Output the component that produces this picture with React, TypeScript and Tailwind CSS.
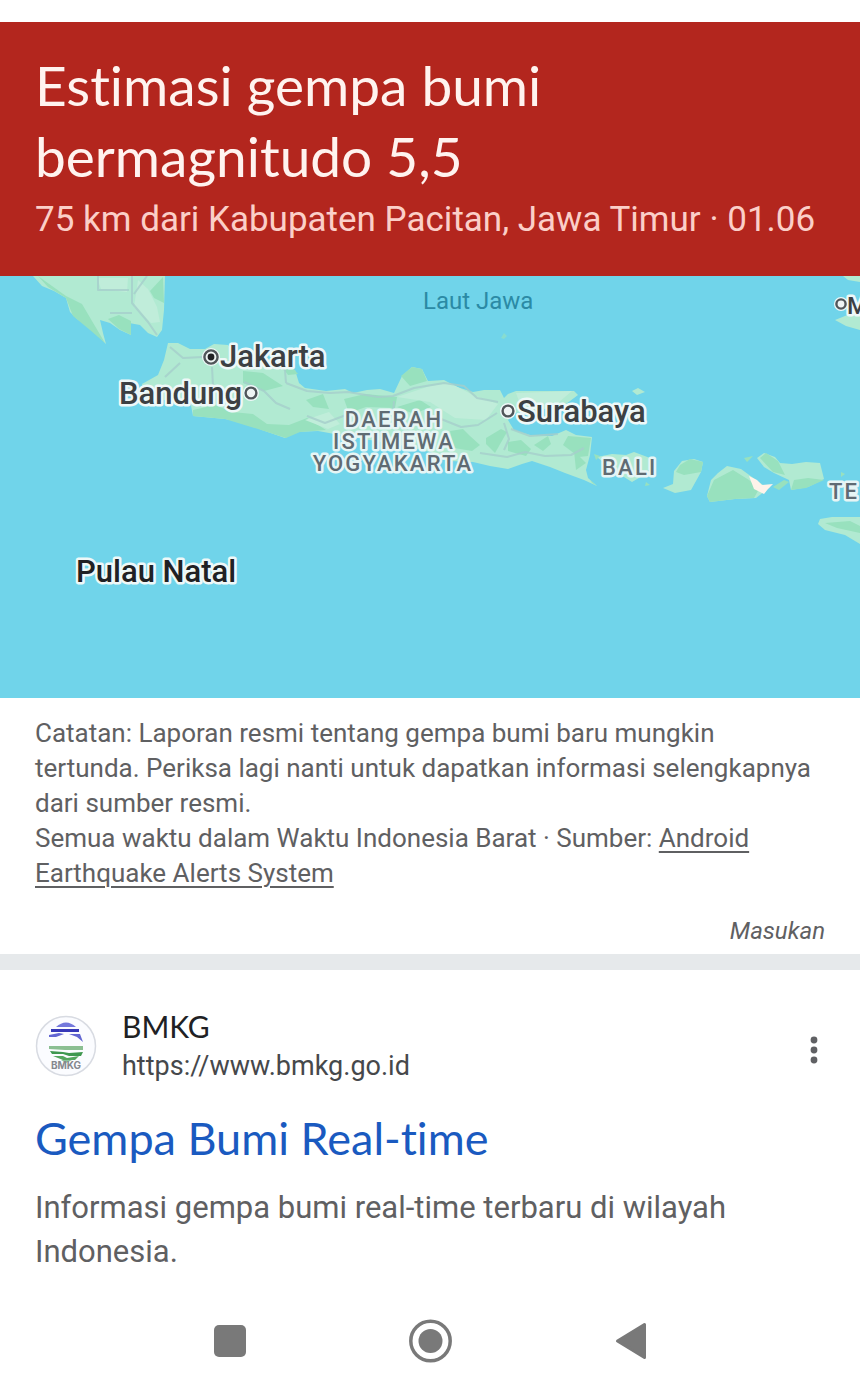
import React from "react";

const label = "fill-[#3c4043] stroke-[#eef8f8] font-medium [paint-order:stroke] [stroke-linejoin:round]";
const region = "fill-[#5f6b73] stroke-[#e6f5f5] text-[22px] font-medium tracking-widest [paint-order:stroke] [stroke-linejoin:round]";

function EarthquakeMap() {
  return (
    <svg
      className="block h-[422px] w-full bg-[#70d4ea]"
      viewBox="0 276 860 422"
      preserveAspectRatio="xMidYMid slice"
      role="img"
      aria-label="Peta Pulau Jawa dan sekitarnya"
    >
      <g fill="#b1ead2">
        <path d="M33 276 42 286 54 291 66 298 70 312 77 319 88 326 96 334 106 344 103 333 100 320 110 323 120 330 131 335 129 323 140 325 148 333 157 337 162 330 164 310 165 276Z" />
        <path d="M168 343 178 343 190 349 205 349 214 344 228 345 235 352 262 350 270 362 283 368 295 370 299 383 305 388 326 391 345 389 353 393 367 390 380 389 394 393 402 376 412 367 422 369 428 381 444 380 457 387 473 392 484 390 500 390 504 398 508 394 516 391 574 391 578 395 566 404 540 410 515 413 508 420 514 430 530 435 552 436 566 430 576 435 592 437 590 455 586 470 588 478 597 486 584 480 565 473 550 467 532 461 522 464 508 469 490 466 473 462 450 461 430 452 400 445 370 440 340 435 318 431 296 432 285 438 262 430 247 423 225 419 193 416 190 400 145 400 142 384 158 375 164 360Z" />
        <path d="M632 391 638 388 645 392 637 395Z" />
        <path d="M597 457 612 454 626 455 634 452 650 458 655 463 644 475 632 482 624 477 610 468Z" />
        <path d="M674 471 682 461 694 459 703 462 701 472 691 490 675 493 663 488 673 484Z" />
        <path d="M711 480 718 473 727 466 741 469 752 477 763 485 770 487 756 498 735 499 710 502 707 496Z" />
        <path d="M757 458 764 453 775 457 780 463 792 464 806 462 820 463 824 479 808 487 791 490 789 480 774 473 764 467Z" />
        <path d="M820 519 832 517 860 517 860 544 845 535 825 530 818 524Z" />
        <path d="M835 320 860 310 860 330 846 326Z" />
        <path d="M843 276H860V282L848 280Z" />
      </g>
      <g fill="#98e1be">
        <path d="M38 276 52 286 66 296 82 304 92 321 105 343 90 330 73 316 66 298 48 287Z" />
        <path d="M108 319 119 315 131 321 131 335 119 329Z" />
        <path d="M150 291 163 277 164 303 154 298Z" />
        <path d="M193 410 215 405 232 412 253 414 267 424 289 425 307 418 326 430 300 432 286 438 258 429 225 419 193 416Z" />
        <path d="M243 371 263 373 283 386 264 391 243 383Z" />
        <path d="M271 352 282 355 298 374 288 375Z" />
        <path d="M306 400 323 394 329 409 313 407Z" />
        <path d="M344 399 365 394 397 397 395 408 366 407 349 413Z" />
        <path d="M401 376 412 367 422 369 427 381 410 386Z" />
        <path d="M397 407 420 400 431 407 414 414Z" />
        <path d="M450 431 463 429 470 436 480 445 472 451 454 448Z" />
        <path d="M486 438 501 429 507 432 495 453 486 444Z" />
        <path d="M508 442 521 440 531 449 526 456 508 451Z" />
        <path d="M534 445 548 436 551 444 543 451Z" />
        <path d="M568 436 591 438 588 456 579 457 563 445Z" />
        <path d="M574 451 586 463 576 470Z" />
        <path d="M680 465 690 459 703 462 701 472 684 475 676 472Z" />
        <path d="M714 480 733 470 749 480 759 489 754 498 735 499 710 502 707 496Z" />
        <path d="M760 458 766 453 778 461 785 475 773 472Z" />
        <path d="M794 480 808 478 824 480 806 488 791 490Z" />
        <path d="M825 523 850 521 860 526 860 533 837 528Z" />
        <path d="M501 338 504 333 507 336 504 339Z" opacity=".6" />
        <path d="M773 487 784 480 789 482 779 490Z" />
      </g>
      <g fill="#c0edda">
        <path d="M97 278 128 278 127 292 101 289Z" />
        <path d="M138 280 148 289 157 307 160 322 151 323 134 307Z" />
        <path d="M397 397 430 386 450 383 473 395 498 404 486 420 455 418 430 402Z" />
        <path d="M516 393 572 391 558 403 520 404Z" />
        <path d="M305 420 329 412 340 424 328 429Z" />
      </g>
      <g fill="none" stroke="#a6cfcc" strokeWidth="2" strokeLinejoin="round" opacity=".8">
        <path d="M98 276V290H129M132 276V303L148 322 157 335M132 313H110M147 276 134 294" />
        <path d="M170 347 183 358 203 357M180 363 165 377" />
        <path d="M212 367 213 386M244 382 264 391 276 403 290 409M271 362 285 370 286 383" />
        <path d="M286 383 307 391 330 393 348 392 378 397 393 396 414 388 444 383 464 386 477 398 498 402" />
        <path d="M307 416 325 423 346 415M394 401 393 413" />
        <path d="M441 419 461 427 478 425 497 413M504 423 509 439 504 450M511 429 530 436 558 434" />
        <path d="M480 453 507 457 525 452 545 456 571 455 584 448" />
      </g>
      <path d="M749 476 757 480 762 485 773 484 768 489 764 494 754 489Z" fill="#fff3ea" />
      <g fill="#98e1be">
        <path d="M594 454 600 456 596 460ZM590 480 597 486 592 483ZM744 458 753 456 747 462ZM841 472 845 474 841 477ZM646 482 650 485 645 486Z" />
      </g>

      <g fill="#eef8f8" stroke="#eef8f8" strokeWidth="6">
        <circle cx="211" cy="357" r="6" />
        <circle cx="251" cy="393" r="5" />
        <circle cx="508" cy="411" r="5" />
        <circle cx="841" cy="304" r="4" />
      </g>
      <g fontFamily="Roboto, sans-serif" strokeWidth="5">
        <text x="423" y="309" className="fill-[#2b8aa5] text-[24px]" strokeWidth="0">Laut Jawa</text>
        <text x="220" y="367" className={`${label} text-[31px]`}>Jakarta</text>
        <text x="119" y="404" className={`${label} text-[31px]`}>Bandung</text>
        <text x="517" y="422" className={`${label} text-[31px]`}>Surabaya</text>
        <text x="76" y="582" className="fill-[#202124] stroke-[#eef8f8] text-[31px] font-medium [paint-order:stroke] [stroke-linejoin:round]">
          Pulau Natal
        </text>
        <text x="847" y="314" className={`${label} text-[24px]`}>M</text>
        <text x="394" y="427" textAnchor="middle" className={region}>DAERAH</text>
        <text x="394" y="449" textAnchor="middle" className={region}>ISTIMEWA</text>
        <text x="393" y="471" textAnchor="middle" className={region}>YOGYAKARTA</text>
        <text x="602" y="475" className={region}>BALI</text>
        <text x="829" y="499" className={region}>TE</text>
      </g>
      <g fill="#eef4f4" stroke="#50565a" strokeWidth="2.4">
        <circle cx="211" cy="357" r="6.6" />
        <circle cx="251" cy="393" r="5.4" />
        <circle cx="508" cy="411" r="5.4" />
        <circle cx="841" cy="304" r="4.6" />
      </g>
      <circle cx="211" cy="357" r="3.4" fill="#202124" />
    </svg>
  );
}

function BmkgLogo() {
  return (
    <svg className="size-[62px] shrink-0" viewBox="0 0 62 62" role="img" aria-label="Logo BMKG">
      <circle cx="31" cy="31" r="29.5" fill="#fbfcff" stroke="#d8dbe2" strokeWidth="1.5" />
      <path d="M21 12Q31 3 41 12Z" fill="#7478dc" />
      <path d="M16 14H44V17H16Z" fill="#3638b8" />
      <path d="M14 20 24 18 29 19 21 22 14 22ZM34 19H45L48 27 42 22Z" fill="#6266d2" />
      <path d="M14 31H48V35H30L14 34Z" fill="#8bbf92" />
      <path d="M15 36 28 37 34 38 48 37 46 41H34L28 39 17 39Z" fill="#3f9850" />
      <path d="M18 41 28 41 32 43 44 41 40 45 28 45Z" fill="#55a65f" />
      <path d="M26 45H37L31 48Z" fill="#8bc49a" />
      <text x="31" y="54" textAnchor="middle" fontFamily="Inter, sans-serif" fontSize="10" fontWeight="700" fill="#85888e">BMKG</text>
    </svg>
  );
}

export default function App() {
  return (
    <div className="bg-white pt-[22px] font-[Roboto,sans-serif] text-[#5f6062]">
      <main>
        <header className="bg-[#b3261e] px-[35px] pt-7 pb-8">
          <h1 className="font-[Lato,sans-serif] text-[55px] leading-[71px] text-[#fff3ef] [font-variant-ligatures:none]">
            Estimasi gempa bumi
            <br />
            bermagnitudo 5,5
          </h1>
          <p className="mt-1 text-[35px] leading-[48px] text-[#fbcfc8]">
            75 km dari Kabupaten Pacitan, Jawa Timur · 01.06
          </p>
        </header>

        <EarthquakeMap />

        <section className="flex flex-col px-[35px] pt-[18px] pb-[7px]">
          <p className="text-[26px] leading-[35px]">
            Catatan: Laporan resmi tentang gempa bumi baru mungkin
            <br />
            tertunda. Periksa lagi nanti untuk dapatkan informasi selengkapnya dari sumber resmi.
          </p>
          <p className="text-[26px] leading-[35px]">
            Semua waktu dalam Waktu Indonesia Barat · Sumber:{" "}
            <a href="#" className="underline decoration-2 underline-offset-4">
              Android
              <br />
              Earthquake Alerts System
            </a>
          </p>
          <a href="#" className="mt-6 self-end text-[24px] leading-8 italic">
            Masukan
          </a>
        </section>

        <hr className="h-4 border-0 bg-[#e6e9eb]" />

        <article className="px-[35px] pt-9">
          <div className="flex items-center gap-[25px]">
            <BmkgLogo />
            <div className="flex-1">
              <p className="font-[Lato,sans-serif] text-[30px] leading-10 text-[#202124]">BMKG</p>
              <p className="text-[27px] leading-10 text-[#46484b]">https://www.bmkg.go.id</p>
            </div>
            <button type="button" aria-label="Opsi lainnya" className="flex w-5 justify-center pt-2">
              <svg className="h-8 w-5" viewBox="0 0 20 32" fill="#606164">
                <circle cx="9" cy="6" r="3.4" />
                <circle cx="9" cy="16" r="3.4" />
                <circle cx="9" cy="26" r="3.4" />
              </svg>
            </button>
          </div>
          <h2 className="mt-5 font-[Lato,sans-serif] text-[45px] leading-[64px] text-[#1a5ac0] [font-variant-ligatures:none]">
            <a href="#">Gempa Bumi Real-time</a>
          </h2>
          <p className="mt-4 text-[31px] leading-[44px]">
            Informasi gempa bumi real-time terbaru di wilayah
            <br />
            Indonesia.
          </p>
        </article>
      </main>

      <nav className="mt-[30px] flex h-[86px] items-center justify-center gap-[157px] pb-3" aria-label="Navigasi sistem">
        <button type="button" aria-label="Aplikasi terbaru">
          <svg className="size-11" viewBox="0 0 44 44">
            <rect x="7" y="6" width="32" height="32" rx="5" fill="#797979" />
          </svg>
        </button>
        <button type="button" aria-label="Beranda">
          <svg className="size-11" viewBox="0 0 44 44">
            <circle cx="22.5" cy="22" r="19.7" fill="none" stroke="#797979" strokeWidth="3.5" />
            <circle cx="22.5" cy="22" r="12" fill="#797979" />
          </svg>
        </button>
        <button type="button" aria-label="Kembali">
          <svg className="size-11" viewBox="0 0 44 44">
            <path d="M8.5 22 35.5 5.5V38.5Z" fill="#797979" stroke="#797979" strokeWidth="3" strokeLinejoin="round" />
          </svg>
        </button>
      </nav>
    </div>
  );
}
